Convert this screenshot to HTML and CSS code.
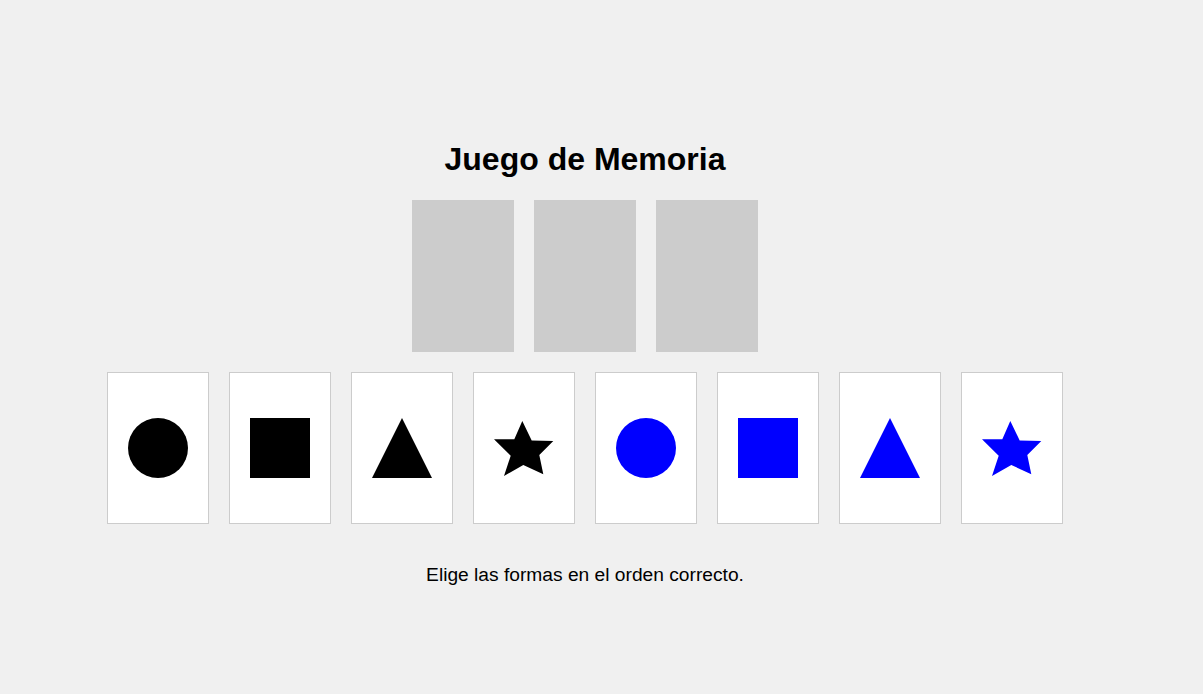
FILE: index.html
```html
<!DOCTYPE html>
<html lang="es">
<head>
<meta charset="utf-8">
<title>Juego de Memoria</title>
<link rel="stylesheet" href="styles.css">
</head>
<body>
<main class="game">
  <h1 class="title">Juego de Memoria</h1>
  <div class="slots">
    <div class="slot"></div>
    <div class="slot"></div>
    <div class="slot"></div>
  </div>
  <div class="cards">
    <div class="card"><div class="circle black"></div></div>
    <div class="card"><div class="square black"></div></div>
    <div class="card"><div class="triangle black"></div></div>
    <div class="card"><svg class="star black" viewBox="0 0 60 60"><polygon points="28.3,3 37.7,22.5 59.3,23 45.3,37 49.3,56.3 29.3,47 10,58 16.7,37.7 0,21.3 20.3,21.3"/></svg></div>
    <div class="card"><div class="circle blue"></div></div>
    <div class="card"><div class="square blue"></div></div>
    <div class="card"><div class="triangle blue"></div></div>
    <div class="card"><svg class="star blue" viewBox="0 0 60 60"><polygon points="28.3,3 37.7,22.5 59.3,23 45.3,37 49.3,56.3 29.3,47 10,58 16.7,37.7 0,21.3 20.3,21.3"/></svg></div>
  </div>
  <p class="hint">Elige las formas en el orden correcto.</p>
</main>
</body>
</html>
```

FILE: styles.css
```css
html, body {
  margin: 0;
  padding: 0;
  background: #f0f0f0;
}
body {
  font-family: "Liberation Sans", Arial, sans-serif;
  color: #000;
}
.game {
  width: 1170px;
  display: flex;
  flex-direction: column;
  align-items: center;
  padding-top: 141px;
}
.title {
  margin: 0;
  font-size: 32px;
  line-height: 36px;
  font-weight: bold;
}
.slots {
  display: flex;
  gap: 20px;
  margin-top: 23px;
}
.slot {
  width: 100px;
  height: 150px;
  background: #cccccc;
  border: 1px solid #cccccc;
}
.cards {
  display: flex;
  gap: 20px;
  margin-top: 20px;
}
.card {
  width: 100px;
  height: 150px;
  background: #fff;
  border: 1px solid #cccccc;
  display: flex;
  align-items: center;
  justify-content: center;
}
.circle {
  width: 60px;
  height: 60px;
  border-radius: 50%;
}
.square {
  width: 60px;
  height: 60px;
}
.circle.black, .square.black { background: #000; }
.circle.blue, .square.blue { background: #0000ff; }
.triangle {
  width: 0;
  height: 0;
  border-left: 30px solid transparent;
  border-right: 30px solid transparent;
  border-bottom: 60px solid #000;
}
.triangle.blue { border-bottom-color: #0000ff; }
.star {
  width: 60px;
  height: 60px;
  display: block;
}
.star.black { fill: #000; }
.star.blue { fill: #0000ff; }
.hint {
  margin: 40px 0 0;
  font-size: 19.2px;
  line-height: 22px;
}
```
